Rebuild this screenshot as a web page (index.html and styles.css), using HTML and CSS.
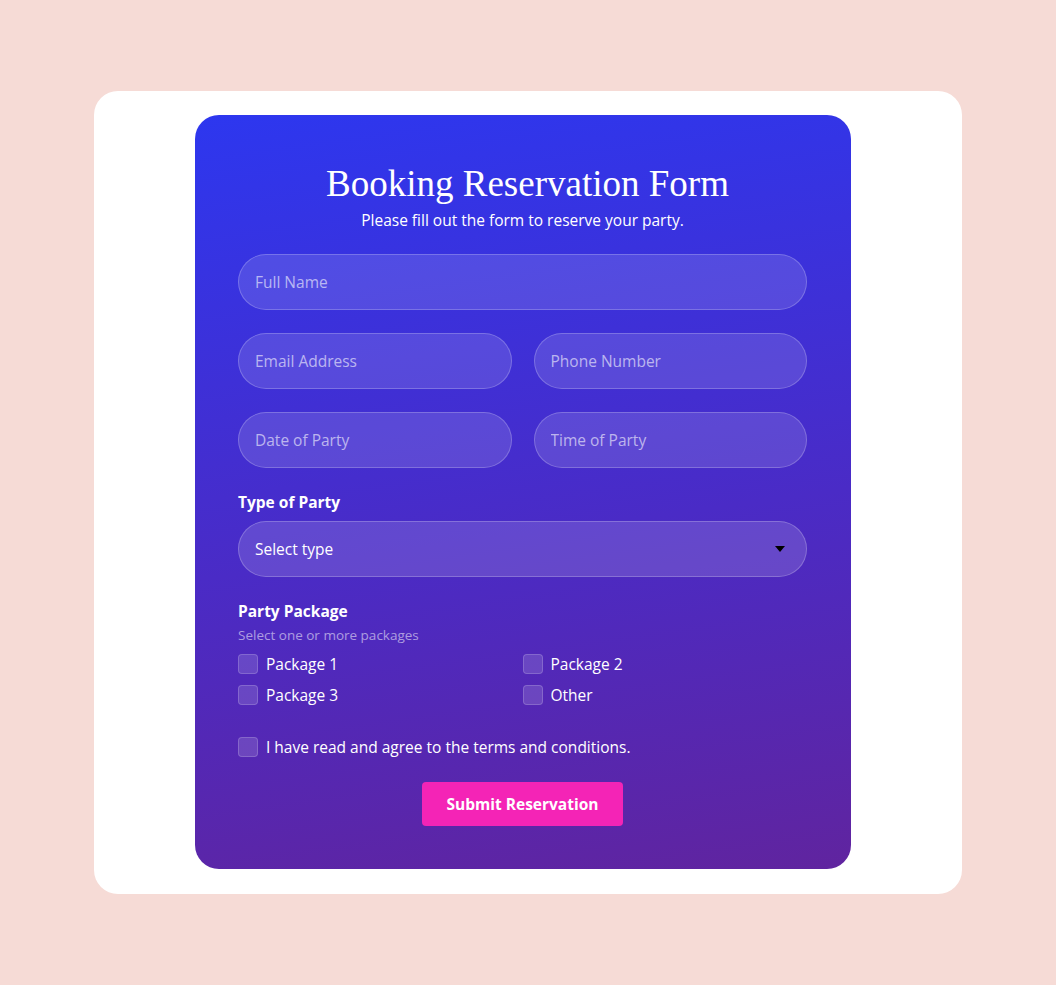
FILE: index.html
```html
<!DOCTYPE html>
<html lang="en">
<head>
    <meta charset="UTF-8">
    <meta name="viewport" content="width=device-width, initial-scale=1.0">
    <title>Booking Reservation Form</title>
    <link rel="stylesheet" href="styles.css">
</head>
<body>
    <div class="card">
        <form class="booking-form">
            <h1>Booking Reservation Form</h1>
            <p class="subtitle">Please fill out the form to reserve your party.</p>

            <input class="field" type="text" placeholder="Full Name">
            <div class="row">
                <input class="field" type="text" placeholder="Email Address">
                <input class="field" type="text" placeholder="Phone Number">
            </div>
            <div class="row">
                <input class="field" type="text" placeholder="Date of Party">
                <input class="field" type="text" placeholder="Time of Party">
            </div>

            <label class="group-label">Type of Party</label>
            <div class="select-wrap">
                <select class="field select">
                    <option>Select type</option>
                    <option>Birthday</option>
                    <option>Wedding</option>
                    <option>Corporate</option>
                </select>
                <svg class="caret" width="10" height="6" viewBox="0 0 10 6"><path d="M0 0h10L5 6z" fill="#000"/></svg>
            </div>

            <div class="packages">
                <div class="group-label">Party Package</div>
                <div class="hint">Select one or more packages</div>
                <div class="check-grid">
                    <label class="check"><input type="checkbox"> Package 1</label>
                    <label class="check"><input type="checkbox"> Package 2</label>
                    <label class="check"><input type="checkbox"> Package 3</label>
                    <label class="check"><input type="checkbox"> Other</label>
                </div>
            </div>

            <label class="check terms"><input type="checkbox"> I have read and agree to the terms and conditions.</label>

            <button type="button" class="submit-btn">Submit Reservation</button>
        </form>
    </div>
</body>
</html>
```

FILE: styles.css
```css
body {
    margin: 0;
    min-height: 100vh;
    display: flex;
    align-items: center;
    justify-content: center;
    background-color: #f6dbd6;
    font-family: "Open Sans", "Noto Sans", sans-serif;
}
.card {
    width: 868px;
    box-sizing: border-box;
    padding: 24px 111px 25px 101px;
    background-color: #ffffff;
    border-radius: 24px;
}
.booking-form {
    display: flex;
    flex-direction: column;
    padding: 45px 44px 43px 43px;
    border-radius: 24px;
    background: linear-gradient(172deg, #2d37ef 0%, #4a2bc6 55%, #60249f 100%);
    color: #ffffff;
}
h1 {
    margin: 4px 0 0;
    padding-left: 10px;
    font-family: "Liberation Serif", serif;
    font-weight: normal;
    font-size: 37px;
    line-height: 40px;
    text-align: center;
}
.subtitle {
    margin: 5px 0 23px;
    font-size: 15.5px;
    line-height: 22px;
    text-align: center;
}
.row {
    display: grid;
    grid-template-columns: 1fr 1fr;
    gap: 22px;
    margin-top: 23px;
}
.field {
    height: 56px;
    box-sizing: border-box;
    width: 100%;
    padding: 0 16px;
    border: 1px solid rgba(255, 255, 255, 0.22);
    border-radius: 28px;
    background-color: rgba(255, 255, 255, 0.13);
    color: #ffffff;
    font-family: inherit;
    font-size: 15.5px;
    outline: none;
}
.field::placeholder {
    color: rgba(255, 255, 255, 0.6);
}
.group-label {
    font-weight: bold;
    font-size: 15.5px;
    line-height: 20px;
}
label.group-label {
    margin: 24px 0 9px;
}
.select-wrap {
    position: relative;
}
.select {
    appearance: none;
    -webkit-appearance: none;
    background-color: rgba(255, 255, 255, 0.14);
}
.select option {
    color: #000000;
}
.caret {
    position: absolute;
    right: 22px;
    top: 25px;
    pointer-events: none;
}
.packages {
    margin-top: 24px;
}
.hint {
    margin-top: 6px;
    font-size: 13.5px;
    line-height: 17px;
    color: rgba(255, 255, 255, 0.55);
}
.check-grid {
    display: grid;
    grid-template-columns: 1fr 1fr;
    row-gap: 11px;
    margin-top: 10px;
}
.check {
    display: flex;
    align-items: center;
    gap: 8px;
    font-size: 15.5px;
    line-height: 20px;
}
.check input {
    appearance: none;
    -webkit-appearance: none;
    margin: 0;
    width: 20px;
    height: 20px;
    border: 1px solid rgba(255, 255, 255, 0.18);
    border-radius: 4px;
    background-color: rgba(255, 255, 255, 0.14);
}
.terms {
    margin-top: 32px;
}
.submit-btn {
    align-self: center;
    margin-top: 25px;
    width: 201px;
    height: 44px;
    border: none;
    border-radius: 4px;
    background-color: #f424b6;
    color: #ffffff;
    font-family: inherit;
    font-weight: bold;
    font-size: 15.5px;
    cursor: pointer;
}
```
